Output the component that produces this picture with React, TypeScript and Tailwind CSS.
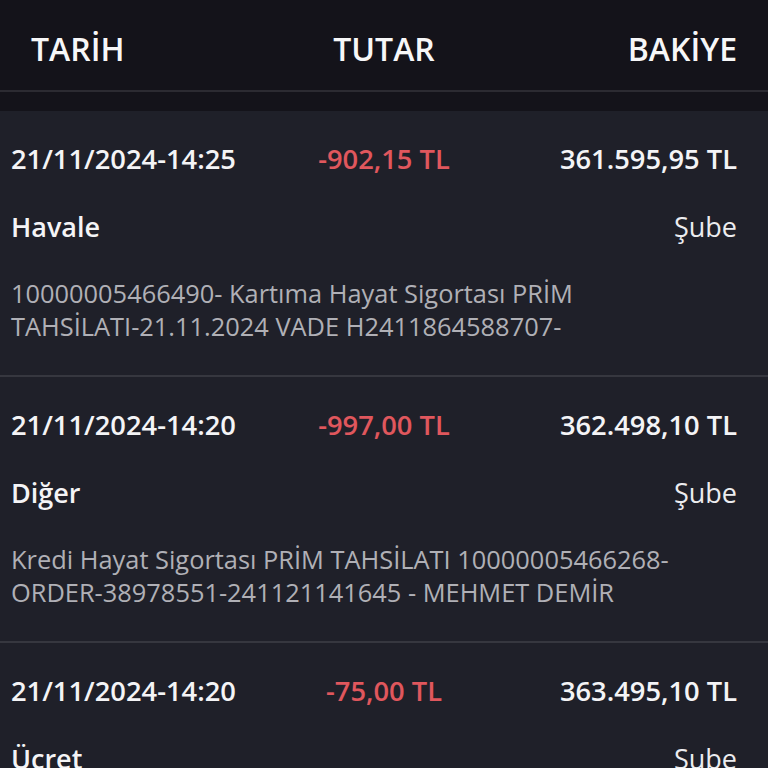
import React from "react";

type Transaction = {
  date: string;
  amount: string;
  balance: string;
  kind: string;
  channel: string;
  description: string[];
};

const transactions: Transaction[] = [
  {
    date: "21/11/2024-14:25",
    amount: "-902,15 TL",
    balance: "361.595,95 TL",
    kind: "Havale",
    channel: "Şube",
    description: [
      "10000005466490- Kartıma Hayat Sigortası PRİM",
      "TAHSİLATI-21.11.2024 VADE H2411864588707-",
    ],
  },
  {
    date: "21/11/2024-14:20",
    amount: "-997,00 TL",
    balance: "362.498,10 TL",
    kind: "Diğer",
    channel: "Şube",
    description: [
      "Kredi Hayat Sigortası PRİM TAHSİLATI 10000005466268-",
      "ORDER-38978551-241121141645 - MEHMET DEMİR",
    ],
  },
  {
    date: "21/11/2024-14:20",
    amount: "-75,00 TL",
    balance: "363.495,10 TL",
    kind: "Ücret",
    channel: "Şube",
    description: ["Hesap İşletim Ücreti"],
  },
];

function TransactionCard({ tx }: { tx: Transaction }) {
  return (
    <div className="flex flex-col gap-[32px] bg-[#1f2029] pt-[30px] pb-[32px] border-b-2 border-[#36373f]">
      <div className="grid grid-cols-[1fr_auto_1fr] items-center text-[27.3px] font-semibold leading-[36px]">
        <span className="pl-[11px] text-[#f4f4f6]">{tx.date}</span>
        <span className="text-[#e0575d]">{tx.amount}</span>
        <span className="justify-self-end pr-[31px] text-[#f4f4f6]">{tx.balance}</span>
      </div>
      <div className="flex items-center justify-between pl-[11px] pr-[31px] text-[27px] leading-[36px]">
        <span className="font-semibold text-[#f4f4f6]">{tx.kind}</span>
        <span className="text-[#ececef]">{tx.channel}</span>
      </div>
      <div className="whitespace-nowrap pl-[11px] pr-[31px] text-[25.4px] leading-[33px] text-[#b0b0b6]">
        {tx.description.map((line) => (
          <div key={line}>{line}</div>
        ))}
      </div>
    </div>
  );
}

export default function App() {
  return (
    <div
      className="h-screen w-full overflow-hidden bg-[#14131a]"
      style={{ fontFamily: '"Open Sans", "Noto Sans", sans-serif' }}
    >
      <div className="grid h-[92px] grid-cols-[1fr_auto_1fr] items-center px-[31px] pt-[8px] text-[32px] font-semibold text-[#f7f7f8] border-b-2 border-[#2c2b32]">
        <span>TARİH</span>
        <span>TUTAR</span>
        <span className="justify-self-end">BAKİYE</span>
      </div>
      <div className="h-[19px]" />
      {transactions.map((tx, i) => (
        <TransactionCard key={i} tx={tx} />
      ))}
    </div>
  );
}
